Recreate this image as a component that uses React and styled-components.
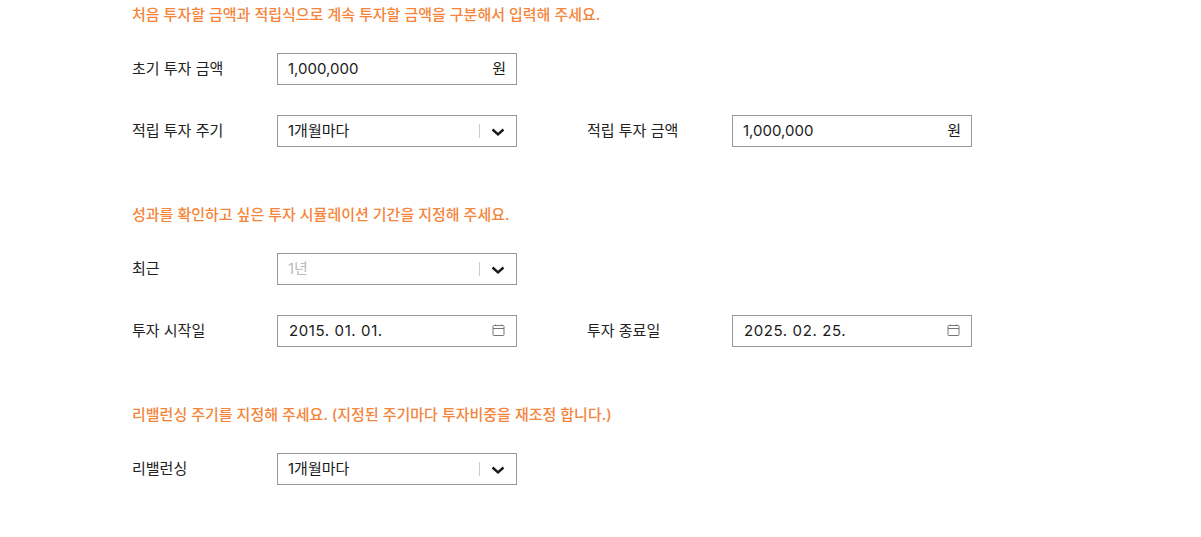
import React from "react";
import styled, { createGlobalStyle } from "styled-components";

const Global = createGlobalStyle`
  html, body { margin: 0; padding: 0; background: #fff; overflow: hidden; }
  body { font-family: Inter, "Noto Sans CJK KR", sans-serif; color: #111; }
`;
const Page = styled.div`
  width: 1201px; height: 537px; box-sizing: border-box; padding: 4px 0 0 132px; overflow: hidden;
`;
const Section = styled.section`
  height: 200px;
  display: flex; flex-direction: column;
`;
const Notice = styled.p`
  margin: 0 0 -1px; height: 20px; line-height: 20px; font-size: 15px; color: #f5853a; font-weight: 500; letter-spacing: 0;
  padding-top: 1px;
`;
const Rows = styled.div`
  margin-top: 29px; display: flex; flex-direction: column; gap: 30px;
`;
const Row = styled.div`
  display: flex; height: 32px; align-items: center;
`;
const Field = styled.div`
  display: flex; align-items: center; width: 455px;
`;
const Label = styled.span`
  width: 145px; height: 20px; line-height: 20px; font-size: 15px; color: #222;
`;
const Box = styled.div`
  width: 240px; height: 32px; box-sizing: border-box; border: 1px solid #999; display: flex; align-items: center;
  padding: 0 10px; font-size: 15px; justify-content: space-between; color: ${p => p.$muted ? "#bbb" : "#1a1a1a"};
`;
const Value = styled.span`
  height: 20px; line-height: 20px;
`;
const Divider = styled.i`
  width: 1px; height: 14px; background: #ccc; margin-left: auto;
`;
const Chevron = styled.svg`
  width: 14px; height: 14px; margin: 1px 1px 0 11px; fill: none; stroke: #1a1a1a; stroke-width: 2.4;
`;
const Select = ({ value, muted }) => (
  <Box $muted={muted}>
    <Value>{value}</Value><Divider />
    <Chevron viewBox="0 0 14 14"><path d="M1.5 4.5l5.5 5 5.5-5" /></Chevron>
  </Box>
);
const Money = () => <Box><Value>1,000,000</Value><Value>원</Value></Box>;
const CalIcon = styled.svg`
  width: 13px; height: 13px; margin: 0 1px 1px 0; fill: none; stroke: #777; stroke-width: 1;
`;
const DateText = styled(Value)`
  padding-left: 1px; letter-spacing: .6px;
`;
const DateBox = ({ value }) => (
  <Box>
    <DateText>{value}</DateText>
    <CalIcon viewBox="0 0 13 13"><rect x="1" y="1.5" width="11" height="10" rx="1" /><path d="M1 4.5h11M3.5 .5v1.5M9.5 .5v1.5" /></CalIcon>
  </Box>
);

export default function App() {
  return (
    <Page>
      <Global />
      <Section>
        <Notice>처음 투자할 금액과 적립식으로 계속 투자할 금액을 구분해서 입력해 주세요.</Notice>
        <Rows>
          <Row><Field><Label>초기 투자 금액</Label><Money /></Field></Row>
          <Row>
            <Field><Label>적립 투자 주기</Label><Select value="1개월마다" /></Field>
            <Field><Label>적립 투자 금액</Label><Money /></Field>
          </Row>
        </Rows>
      </Section>
      <Section>
        <Notice>성과를 확인하고 싶은 투자 시뮬레이션 기간을 지정해 주세요.</Notice>
        <Rows>
          <Row><Field><Label>최근</Label><Select value="1년" muted /></Field></Row>
          <Row>
            <Field><Label>투자 시작일</Label><DateBox value="2015. 01. 01." /></Field>
            <Field><Label>투자 종료일</Label><DateBox value="2025. 02. 25." /></Field>
          </Row>
        </Rows>
      </Section>
      <Section>
        <Notice>리밸런싱 주기를 지정해 주세요. (지정된 주기마다 투자비중을 재조정 합니다.)</Notice>
        <Rows>
          <Row><Field><Label>리밸런싱</Label><Select value="1개월마다" /></Field></Row>
        </Rows>
      </Section>
    </Page>
  );
}
